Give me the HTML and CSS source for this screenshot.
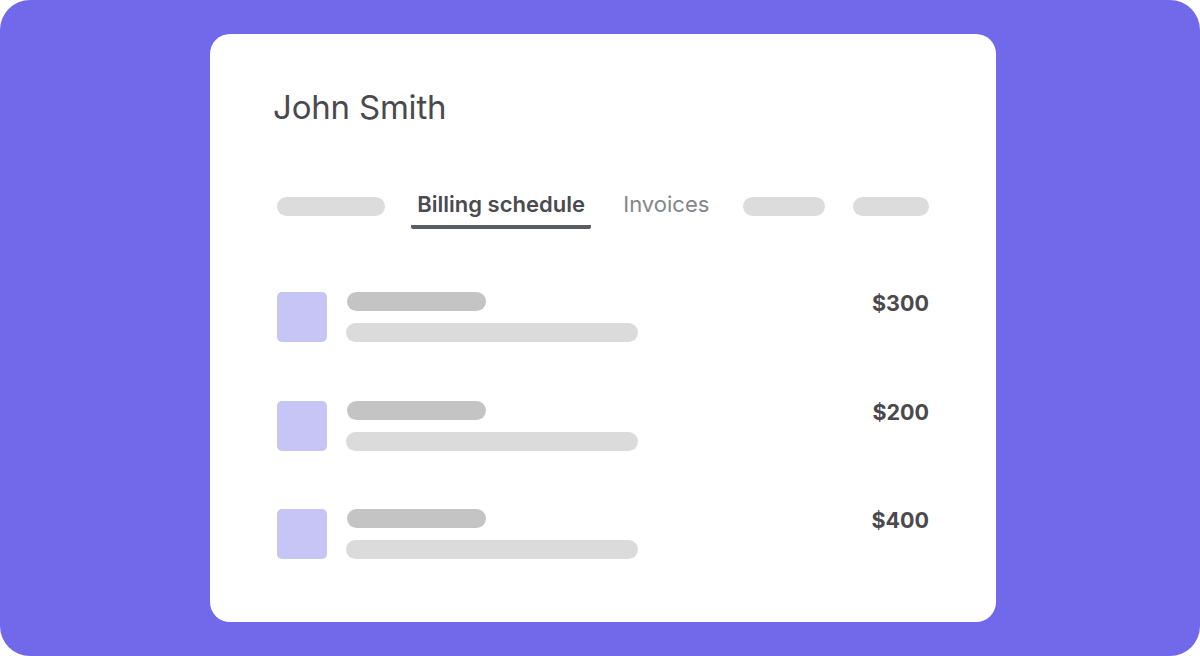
FILE: index.html
```html
<!DOCTYPE html>
<html>
<head>
<meta charset="utf-8">
<link rel="stylesheet" href="styles.css">
</head>
<body>
<div class="stage">
  <div class="card">
    <h1 class="name">John Smith</h1>
    <div class="tabs">
      <span class="pill pill-a"></span>
      <span class="tab active">Billing schedule</span>
      <span class="tab">Invoices</span>
      <span class="pill pill-b"></span>
      <span class="pill pill-c"></span>
    </div>
    <div class="list">
      <div class="row">
        <span class="thumb"></span>
        <div class="bars"><span class="bar short"></span><span class="bar long"></span></div>
        <span class="price">$300</span>
      </div>
      <div class="row">
        <span class="thumb"></span>
        <div class="bars"><span class="bar short"></span><span class="bar long"></span></div>
        <span class="price">$200</span>
      </div>
      <div class="row">
        <span class="thumb"></span>
        <div class="bars"><span class="bar short"></span><span class="bar long"></span></div>
        <span class="price">$400</span>
      </div>
    </div>
  </div>
</div>
</body>
</html>
```
FILE: styles.css
```css
html, body {
  margin: 0;
  padding: 0;
  background: #ffffff;
}
body {
  font-family: Inter, "Noto Sans", sans-serif;
}
.stage {
  width: 1200px;
  height: 656px;
  background: #7169ea;
  border-radius: 30px;
  padding-top: 34px;
  box-sizing: border-box;
}
.card {
  margin-left: 210px;
  width: 786px;
  height: 588px;
  box-sizing: border-box;
  background: #ffffff;
  border-radius: 20px;
  padding: 53px 67px 0 63px;
}
.name {
  margin: 0;
  font-size: 33px;
  line-height: 40px;
  font-weight: 400;
  color: #4a4a4e;
  letter-spacing: -0.2px;
}
.tabs {
  margin-top: 64px;
  padding-left: 4px;
  display: flex;
  justify-content: space-between;
  align-items: flex-start;
}
.pill {
  display: block;
  height: 19px;
  margin-top: 6px;
  border-radius: 10px;
  background: #dcdcdc;
}
.pill-a { width: 108px; }
.pill-b { width: 82px; }
.pill-c { width: 76px; }
.tab {
  display: block;
  font-size: 22px;
  line-height: 26px;
  padding: 0 5px 8px 4px;
  border-bottom: 4px solid transparent;
  color: #85858a;
  font-weight: 400;
}
.tab.active {
  margin-left: -2px;
  padding: 0 6px 8px 6px;
  color: #4a4a4f;
  font-weight: 600;
  border-bottom-color: #5b5b62;
  border-radius: 0 0 2px 2px;
}
.list {
  margin-top: 63px;
  padding-left: 4px;
  display: flex;
  flex-direction: column;
  gap: 58.5px;
}
.row {
  display: flex;
  align-items: flex-start;
}
.thumb {
  display: block;
  width: 50px;
  height: 50px;
  border-radius: 5px;
  background: #c7c5f6;
}
.bars {
  margin-left: 19px;
  display: flex;
  flex-direction: column;
  gap: 12px;
}
.bar {
  display: block;
  height: 19px;
  border-radius: 10px;
}
.bar.short {
  width: 139px;
  margin-left: 1px;
  background: #c4c4c4;
}
.bar.long {
  width: 292px;
  background: #dbdbdb;
}
.price {
  margin-left: auto;
  margin-top: 1px;
  font-size: 21.5px;
  line-height: 20px;
  font-weight: 700;
  color: #4a4a4e;
}
```
